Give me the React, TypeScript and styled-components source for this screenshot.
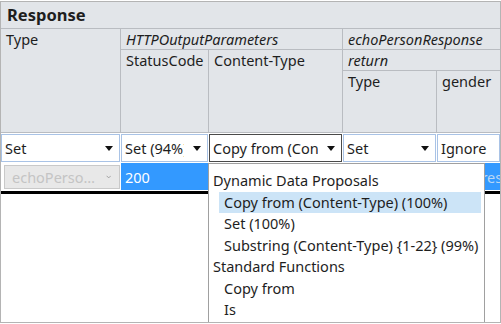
import React from 'react';
import styled, { createGlobalStyle } from 'styled-components';

const Global = createGlobalStyle`
  html, body { margin: 0; padding: 0; background: #ffffff; }
  body { font-family: "Noto Sans", "Open Sans", sans-serif; }
`;

const COLS = '119px 87px 133px 93px 1fr';
const LINE = '#b9bcc1';
const HEAD = '#e2e5e9';

const Frame = styled.div`
  position: relative;
  margin-top: 1px;
  width: 501px;
  height: 322px;
  box-sizing: border-box;
  border: 1px solid #b4b4b4;
  background: #ffffff;
  overflow: hidden;
  font-size: 14.5px;
  color: #1e1e1e;
`;

const Title = styled.div`
  height: 26px;
  background: ${HEAD};
  border-bottom: 1px solid ${LINE};
  font-weight: bold;
  font-size: 16.5px;
  line-height: 26px;
  padding-left: 6px;
`;

const HeaderGrid = styled.div`
  display: grid;
  grid-template-columns: ${COLS};
  grid-template-rows: 20px 20px 61px;
  gap: 1px;
  background: ${LINE};
  border-bottom: 1px solid ${LINE};
`;

const HeadCell = styled.div<{ $col: string; $row: string; $italic?: boolean }>`
  grid-column: ${p => p.$col};
  grid-row: ${p => p.$row};
  background: ${HEAD};
  font-style: ${p => (p.$italic ? 'italic' : 'normal')};
  padding-left: 5px;
  line-height: 21px;
  white-space: nowrap;
  overflow: hidden;
`;

const EditorRow = styled.div`
  display: grid;
  grid-template-columns: ${COLS};
  gap: 1px;
  height: 30px;
  background: #ffffff;
`;

const EditorBox = styled.div<{ $focused?: boolean }>`
  margin: 1px 0;
  display: flex;
  align-items: center;
  border: 1px solid ${p => (p.$focused ? '#4a4a4a' : '#a9c3e6')};
  background: #ffffff;
  padding-left: 3px;
  padding-right: 6px;
  gap: 9px;
  min-width: 0;
`;

const EditorText = styled.span`
  flex: 1;
  min-width: 0;
  white-space: nowrap;
  overflow: hidden;
`;

const Arrow = styled.span`
  width: 0;
  height: 0;
  flex: none;
  border-left: 4.5px solid transparent;
  border-right: 4.5px solid transparent;
  border-top: 5px solid #111111;
`;

const DataRow = styled.div`
  display: grid;
  grid-template-columns: ${COLS};
  gap: 1px;
  height: 28px;
  border-bottom: 3px solid #000000;
  background: #ffffff;
`;

const ComboCell = styled.div`
  padding: 2px 0 2px 3px;
  display: flex;
  border-left: 1px solid #9ec5ef;
  margin-left: -1px;
`;

const DisabledCombo = styled.div`
  flex: 1;
  display: flex;
  align-items: center;
  justify-content: space-between;
  background: #e8e8e8;
  border: 1px solid #c9c9c9;
  color: #c4c4c4;
  padding: 0 8px 0 7px;
  gap: 6px;
  min-width: 0;
`;

const Ellipsis = styled.span`
  white-space: nowrap;
  overflow: hidden;
  text-overflow: ellipsis;
`;

const SelCell = styled.div<{ $muted?: boolean }>`
  background: #3399ff;
  color: ${p => (p.$muted ? '#b9d6f5' : '#ffffff')};
  padding: 2px 0 0 4px;
  line-height: 24px;
  margin-bottom: 1px;
  white-space: nowrap;
  overflow: hidden;
`;

const Popup = styled.div`
  position: absolute;
  left: 207px;
  top: 161px;
  width: 277px;
  bottom: -20px;
  box-sizing: border-box;
  background: #ffffff;
  border: 1px solid #a0a0a0;
  padding: 6px 3px 0 0;
`;

const GroupHead = styled.div`
  height: 21.5px;
  line-height: 21.5px;
  padding-left: 4px;
  white-space: nowrap;
`;

const Item = styled.div<{ $active?: boolean }>`
  height: 21.5px;
  line-height: 21.5px;
  margin-left: 10px;
  padding-left: 5px;
  background: ${p => (p.$active ? '#cce4f7' : 'transparent')};
  white-space: nowrap;
`;

const Chevron = () => (
  <svg width="9" height="6" viewBox="0 0 9 6">
    <path d="M1 1 L4.5 4.5 L8 1" fill="none" stroke="#8a8a8a" strokeWidth="1.2" />
  </svg>
);

export default function App() {
  return (
    <>
      <Global />
      <Frame>
        <Title>Response</Title>
        <HeaderGrid>
          <HeadCell $col="1" $row="1 / 4">Type</HeadCell>
          <HeadCell $col="2 / 4" $row="1" $italic>HTTPOutputParameters</HeadCell>
          <HeadCell $col="2" $row="2 / 4">StatusCode</HeadCell>
          <HeadCell $col="3" $row="2 / 4">Content-Type</HeadCell>
          <HeadCell $col="4 / 6" $row="1" $italic>echoPersonResponse</HeadCell>
          <HeadCell $col="4 / 6" $row="2" $italic>return</HeadCell>
          <HeadCell $col="4" $row="3">Type</HeadCell>
          <HeadCell $col="5" $row="3">gender</HeadCell>
        </HeaderGrid>
        <EditorRow>
          <EditorBox><EditorText>Set</EditorText><Arrow /></EditorBox>
          <EditorBox><EditorText>Set (94%)</EditorText><Arrow /></EditorBox>
          <EditorBox $focused><EditorText>Copy from (Content-Type)</EditorText><Arrow /></EditorBox>
          <EditorBox><EditorText>Set</EditorText><Arrow /></EditorBox>
          <EditorBox><EditorText>Ignore</EditorText></EditorBox>
        </EditorRow>
        <DataRow>
          <ComboCell>
            <DisabledCombo><Ellipsis>echoPersonResponse</Ellipsis><Chevron /></DisabledCombo>
          </ComboCell>
          <SelCell>200</SelCell>
          <SelCell />
          <SelCell />
          <SelCell $muted>Compress</SelCell>
        </DataRow>
        <Popup>
          <GroupHead>Dynamic Data Proposals</GroupHead>
          <Item $active>Copy from (Content-Type) (100%)</Item>
          <Item>Set (100%)</Item>
          <Item>Substring (Content-Type) {'{1-22}'} (99%)</Item>
          <GroupHead>Standard Functions</GroupHead>
          <Item>Copy from</Item>
          <Item>Is</Item>
        </Popup>
      </Frame>
    </>
  );
}
